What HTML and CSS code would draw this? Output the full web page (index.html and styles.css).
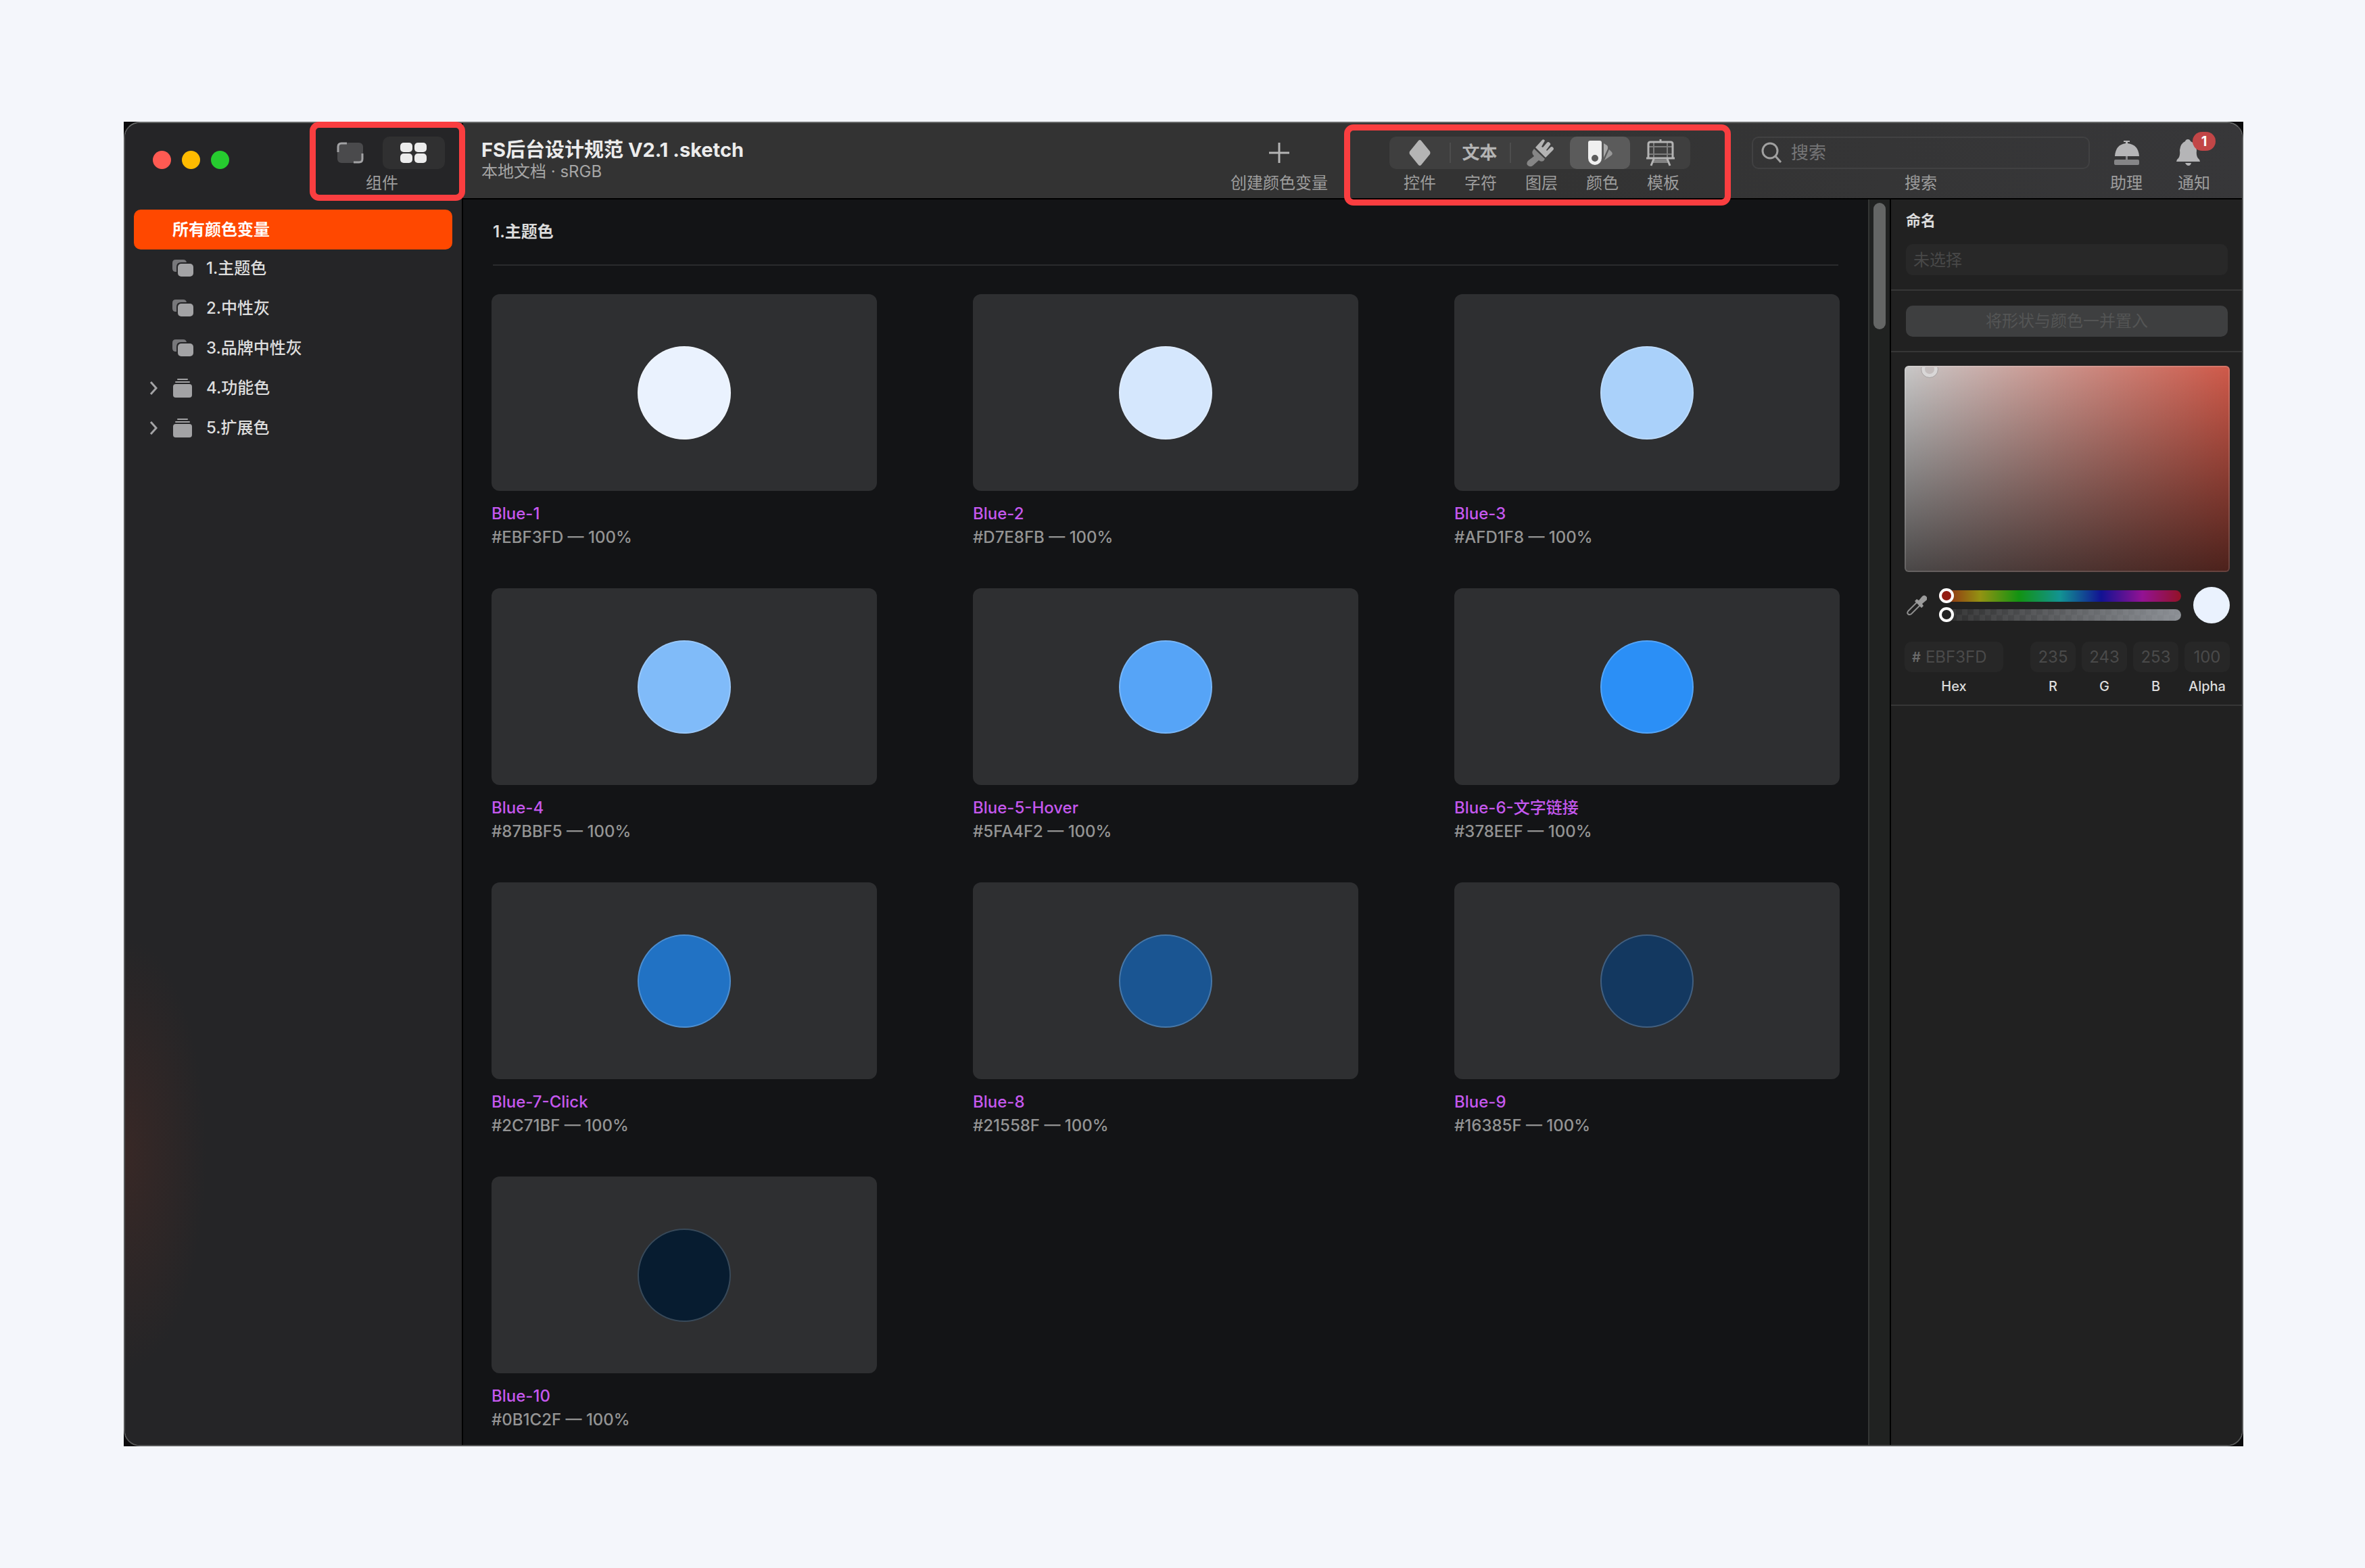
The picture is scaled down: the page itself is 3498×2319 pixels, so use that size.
FILE: index.html
```html
<!DOCTYPE html>
<html lang="zh-CN">
<head>
    <meta charset="UTF-8">
    <meta name="viewport" content="width=device-width, initial-scale=1.0">
    <title>FS后台设计规范 V2.1 .sketch</title>
    <link rel="stylesheet" href="styles.css">
</head>
<body>
    <div class="backdrop">
        <div class="window">
            <aside class="sidebar">
                <div class="sidebar-top">
                    <div class="lights">
                        <span class="light red"></span>
                        <span class="light yellow"></span>
                        <span class="light green"></span>
                    </div>
                    <div class="tool view-switch">
                        <div class="segments">
                            <button type="button" class="view-button" aria-label="画布">
                                <svg width="40" height="32" viewBox="0 0 40 32">
                                    <rect x="1" y="1" width="38" height="30" rx="6" fill="#4a4a4c"/>
                                    <path d="M2 15V7q0-5 5-5h8M38 17v8q0 5-5 5h-8" fill="none" stroke="#a2a2a4" stroke-width="3"/>
                                </svg>
                            </button>
                            <button type="button" class="view-button active" aria-label="组件">
                                <svg width="40" height="32" viewBox="0 0 40 32" fill="#ececec">
                                    <rect x="0" y="1" width="18" height="14" rx="5"/>
                                    <rect x="21" y="1" width="18" height="14" rx="5"/>
                                    <rect x="0" y="17" width="18" height="14" rx="5"/>
                                    <rect x="21" y="17" width="18" height="14" rx="5"/>
                                </svg>
                            </button>
                        </div>
                        <span class="tool-label">组件</span>
                        <span class="highlight"></span>
                    </div>
                </div>
                <nav>
                    <ul class="groups">
                        <li><a href="#" class="group active">所有颜色变量</a></li>
                        <li><a href="#" class="group">
                            <span class="chevron"></span>
                            <svg class="group-icon" width="32" height="28" viewBox="0 0 32 28">
                                <path d="M6 19H5q-5 0-5-5V6q0-5 5-5h11q4 0 5 4h-8q-7 0-7 7z" fill="#77777a"/>
                                <rect x="8" y="7" width="23" height="19" rx="5" fill="#a3a3a5"/>
                            </svg>
                            1.主题色</a></li>
                        <li><a href="#" class="group">
                            <span class="chevron"></span>
                            <svg class="group-icon" width="32" height="28" viewBox="0 0 32 28">
                                <path d="M6 19H5q-5 0-5-5V6q0-5 5-5h11q4 0 5 4h-8q-7 0-7 7z" fill="#77777a"/>
                                <rect x="8" y="7" width="23" height="19" rx="5" fill="#a3a3a5"/>
                            </svg>
                            2.中性灰</a></li>
                        <li><a href="#" class="group">
                            <span class="chevron"></span>
                            <svg class="group-icon" width="32" height="28" viewBox="0 0 32 28">
                                <path d="M6 19H5q-5 0-5-5V6q0-5 5-5h11q4 0 5 4h-8q-7 0-7 7z" fill="#77777a"/>
                                <rect x="8" y="7" width="23" height="19" rx="5" fill="#a3a3a5"/>
                            </svg>
                            3.品牌中性灰</a></li>
                        <li><a href="#" class="group">
                            <svg class="chevron" width="12" height="20" viewBox="0 0 12 20"><path d="M2 1l8 9-8 9" fill="none" stroke="#a3a3a5" stroke-width="3"/></svg>
                            <svg class="group-icon" width="32" height="28" viewBox="0 0 32 28" fill="#a3a3a5">
                                <rect x="7" y="0" width="16" height="2" rx="1"/>
                                <rect x="4" y="4" width="22" height="2" rx="1"/>
                                <rect x="1" y="8" width="28" height="20" rx="4"/>
                            </svg>
                            4.功能色</a></li>
                        <li><a href="#" class="group">
                            <svg class="chevron" width="12" height="20" viewBox="0 0 12 20"><path d="M2 1l8 9-8 9" fill="none" stroke="#a3a3a5" stroke-width="3"/></svg>
                            <svg class="group-icon" width="32" height="28" viewBox="0 0 32 28" fill="#a3a3a5">
                                <rect x="7" y="0" width="16" height="2" rx="1"/>
                                <rect x="4" y="4" width="22" height="2" rx="1"/>
                                <rect x="1" y="8" width="28" height="20" rx="4"/>
                            </svg>
                            5.扩展色</a></li>
                    </ul>
                </nav>
            </aside>

            <div class="workspace">
                <header class="toolbar">
                    <div class="document">
                        <h1>FS后台设计规范 V2.1 .sketch</h1>
                        <p>本地文档 · sRGB</p>
                    </div>

                    <button type="button" class="tool create">
                        <svg class="tool-icon" width="32" height="48" viewBox="0 0 32 48"><path d="M1 24h30M16 9v30" stroke="#b4b4b4" stroke-width="3"/></svg>
                        <span class="tool-label">创建颜色变量</span>
                    </button>

                    <div class="tool types">
                        <div class="segments type-bar">
                            <button type="button" class="type-button" aria-label="控件">
                                <svg width="34" height="40" viewBox="0 0 34 40"><path d="M15 2q2-2 4 0l13 16q1 2 0 4L19 38q-2 2-4 0L2 22q-1-2 0-4z" fill="#b4b4b4"/></svg>
                            </button>
                            <button type="button" class="type-button divided">文本</button>
                            <button type="button" class="type-button divided" aria-label="图层">
                                <svg width="40" height="42" viewBox="0 0 40 42">
                                    <path d="M13 13L23 2q2-2 4 1l-5 9 2 1 6-7q2-2 4 0t1 3l-6 8 1 1 5-5q2-2 4 0t0 4L28 28z" fill="#b4b4b4"/>
                                    <path d="M11 15l16 15-2 3q-4 2-7-1L9 40q-4 3-8-1-2-4 2-7l8-6q-4-4-2-8z" fill="#868686"/>
                                </svg>
                            </button>
                            <button type="button" class="type-button active" aria-label="颜色">
                                <svg width="36" height="36" viewBox="0 0 36 36">
                                    <path fill-rule="evenodd" d="M3 0h14q3 0 3 3v23a10 10 0 0 1-20 0V3q0-3 3-3zM10 21a5 5 0 1 0 0 10 5 5 0 0 0 0-10z" fill="#efefef"/>
                                    <path d="M23 4l5 3q2 2 1 5l-6 13z" fill="#a9a9a9"/>
                                    <path d="M31 13l4 4q2 3-1 5l-10 7z" fill="#999"/>
                                </svg>
                            </button>
                            <button type="button" class="type-button" aria-label="模板">
                                <svg width="42" height="40" viewBox="0 0 42 40" fill="none">
                                    <path d="M10 30h22v5H9z" fill="#828282"/>
                                    <path d="M11 5v22M31 5v22M4 11h34M4 22h34" stroke="#7d7d7d" stroke-width="2"/>
                                    <path d="M3 27V7q0-3 3-3h30q3 0 3 3v20M0 28h42M21 0v4M11 29L7 39M31 29l4 10" stroke="#b4b4b4" stroke-width="3"/>
                                </svg>
                            </button>
                        </div>
                        <div class="type-labels">
                            <span class="tool-label">控件</span>
                            <span class="tool-label">字符</span>
                            <span class="tool-label">图层</span>
                            <span class="tool-label">颜色</span>
                            <span class="tool-label">模板</span>
                        </div>
                        <span class="highlight"></span>
                    </div>

                    <div class="tool search">
                        <div class="search-box">
                            <svg width="30" height="32" viewBox="0 0 30 32" fill="none" stroke="#a0a0a0" stroke-width="3"><circle cx="13" cy="13" r="11"/><path d="M21 21l8 9"/></svg>
                            <input type="search" id="search" placeholder="搜索">
                        </div>
                        <label class="tool-label" for="search">搜索</label>
                    </div>

                    <button type="button" class="tool assistant">
                        <svg class="tool-icon" width="40" height="48" viewBox="0 0 40 48">
                            <path d="M16 6h9v2h-3v2q16 2 17 19H3Q4 12 19 10V8h-3z" fill="#b5b5b7"/>
                            <path d="M19 29h3v5h15q2 0 2 2v4q0 2-2 2H4q-2 0-2-2v-4q0-2 2-2h15z" fill="#858587"/>
                        </svg>
                        <span class="tool-label">助理</span>
                    </button>
                    <button type="button" class="tool notice">
                        <svg class="tool-icon" width="52" height="48" viewBox="0 0 52 48" fill="#b5b5b7">
                            <path d="M17 4q3 0 4 3 8 3 9 13-1 8 2 12 3 2 3 5H0q0-3 3-5 3-4 2-12 1-10 8-13 1-3 4-3zM13 39h9q-1 4-4 4t-5-4z"/>
                        </svg>
                        <span class="tool-label">通知</span>
                        <span class="badge">1</span>
                    </button>
                </header>

                <div class="panes">
                    <main class="library">
                        <h2>1.主题色</h2>
                        <div class="swatches">
                            <figure class="swatch">
                                <div class="card"><span class="dot blue-1"></span></div>
                                <figcaption><strong>Blue-1</strong><span>#EBF3FD — 100%</span></figcaption>
                            </figure>
                            <figure class="swatch">
                                <div class="card"><span class="dot blue-2"></span></div>
                                <figcaption><strong>Blue-2</strong><span>#D7E8FB — 100%</span></figcaption>
                            </figure>
                            <figure class="swatch">
                                <div class="card"><span class="dot blue-3"></span></div>
                                <figcaption><strong>Blue-3</strong><span>#AFD1F8 — 100%</span></figcaption>
                            </figure>
                            <figure class="swatch">
                                <div class="card"><span class="dot blue-4"></span></div>
                                <figcaption><strong>Blue-4</strong><span>#87BBF5 — 100%</span></figcaption>
                            </figure>
                            <figure class="swatch">
                                <div class="card"><span class="dot blue-5"></span></div>
                                <figcaption><strong>Blue-5-Hover</strong><span>#5FA4F2 — 100%</span></figcaption>
                            </figure>
                            <figure class="swatch">
                                <div class="card"><span class="dot blue-6"></span></div>
                                <figcaption><strong>Blue-6-文字链接</strong><span>#378EEF — 100%</span></figcaption>
                            </figure>
                            <figure class="swatch">
                                <div class="card"><span class="dot blue-7"></span></div>
                                <figcaption><strong>Blue-7-Click</strong><span>#2C71BF — 100%</span></figcaption>
                            </figure>
                            <figure class="swatch">
                                <div class="card"><span class="dot blue-8"></span></div>
                                <figcaption><strong>Blue-8</strong><span>#21558F — 100%</span></figcaption>
                            </figure>
                            <figure class="swatch">
                                <div class="card"><span class="dot blue-9"></span></div>
                                <figcaption><strong>Blue-9</strong><span>#16385F — 100%</span></figcaption>
                            </figure>
                            <figure class="swatch">
                                <div class="card"><span class="dot blue-10"></span></div>
                                <figcaption><strong>Blue-10</strong><span>#0B1C2F — 100%</span></figcaption>
                            </figure>
                        </div>
                    </main>

                    <div class="scroller"><div class="scroller-thumb"></div></div>

                    <aside class="inspector">
                        <section class="name-section">
                            <label for="name">命名</label>
                            <input type="text" id="name" placeholder="未选择" disabled>
                        </section>
                        <section class="insert-section">
                            <button type="button" disabled>将形状与颜色一并置入</button>
                        </section>
                        <section class="color-section">
                            <div class="picker"><span class="picker-handle"></span></div>
                            <div class="color-row">
                                <button type="button" class="eyedropper" aria-label="取色器">
                                    <svg width="30" height="30" viewBox="0 0 30 30">
                                        <path d="M16 10L3 23q-3 3-1 5t5 0l13-13" fill="none" stroke="#8e8e8e" stroke-width="2"/>
                                        <path d="M12 9l3-3 3 2 5-6q3-3 6 0t0 6l-6 5 2 3-3 3z" fill="#9b9b9b"/>
                                    </svg>
                                </button>
                                <div class="sliders">
                                    <input type="range" class="hue" min="0" max="360" value="0" aria-label="色相">
                                    <input type="range" class="alpha" min="0" max="100" value="0" aria-label="不透明度">
                                </div>
                                <span class="current"></span>
                            </div>
                            <div class="values">
                                <div class="field hex">
                                    <div class="hex-box"><span>#</span><input type="text" id="hex" value="EBF3FD" disabled></div>
                                    <label for="hex">Hex</label>
                                </div>
                                <div class="field">
                                    <input type="text" id="r" value="235" disabled>
                                    <label for="r">R</label>
                                </div>
                                <div class="field">
                                    <input type="text" id="g" value="243" disabled>
                                    <label for="g">G</label>
                                </div>
                                <div class="field">
                                    <input type="text" id="b" value="253" disabled>
                                    <label for="b">B</label>
                                </div>
                                <div class="field">
                                    <input type="text" id="a" value="100" disabled>
                                    <label for="a">Alpha</label>
                                </div>
                            </div>
                        </section>
                    </aside>
                </div>
            </div>
        </div>
    </div>
</body>
</html>
```
FILE: styles.css
```css
* {
    box-sizing: border-box;
}
body {
    margin: 0;
    padding: 180px 180px 180px 183px;
    background: #f4f6fb;
    color: #dcdcdc;
    font-family: Inter, "Noto Sans CJK SC", sans-serif;
    font-size: 24px;
    line-height: 30px;
}
button, input {
    font: inherit;
    color: inherit;
    border: none;
    padding: 0;
    background: none;
}
h1, h2, p, ul, figure {
    margin: 0;
    padding: 0;
}
.backdrop {
    background: #0b0b0c;
}
.window {
    display: flex;
    min-height: calc(100vh - 360px);
    border: 2px solid #565757;
    border-top-color: #666867;
    border-radius: 24px;
}

/* sidebar */
.sidebar {
    position: relative;
    z-index: 1;
    flex: none;
    width: 500px;
    border-right: 2px solid #000;
    border-radius: 22px 0 0 22px;
    background: radial-gradient(120px 320px at 0 78%, #382826, rgba(37, 37, 37, 0)), #252527;
}
.sidebar-top {
    display: flex;
    justify-content: space-between;
    height: 128px;
    padding: 20px 25px 0 41px;
}
.lights {
    display: flex;
    gap: 16px;
    padding-top: 21px;
}
.light {
    width: 27px;
    height: 27px;
    border-radius: 50%;
}
.red {
    background: #ff5a52;
}
.yellow {
    background: #ffbb00;
}
.green {
    background: #26cb2f;
}
.segments {
    display: flex;
    height: 48px;
}
.view-switch .segments {
    gap: 2px;
}
.view-button {
    display: flex;
    align-items: center;
    justify-content: center;
    width: 92px;
    border-radius: 10px;
}
.view-button.active {
    background: #303031;
}
.groups {
    list-style: none;
    padding: 0 14px 0 13px;
}
.group {
    display: flex;
    align-items: center;
    height: 59px;
    padding: 0 23px 4px;
    border-radius: 10px;
    color: #dedede;
    font-weight: 500;
    text-decoration: none;
}
.group.active {
    padding: 0 57px;
    background: #ff4800;
    color: #fff;
    font-weight: 700;
}
.chevron {
    width: 12px;
    margin-right: 22px;
}
.group-icon {
    margin-right: 18px;
}

/* toolbar */
.workspace {
    display: flex;
    flex: 1;
    flex-direction: column;
    min-width: 0;
}
.toolbar {
    display: flex;
    align-items: flex-start;
    height: 113px;
    padding: 20px 47px 0 27px;
    border-bottom: 2px solid #000;
    border-radius: 0 22px 0 0;
    background: linear-gradient(to right, #333, #333 60%, #373739);
}
.document {
    flex: 1;
    padding-top: 2px;
}
.document h1 {
    color: #ececec;
    font-size: 29px;
    font-weight: 700;
    line-height: 36px;
}
.document p {
    color: #a6a6a6;
    line-height: 28px;
}
.tool {
    position: relative;
    display: flex;
    flex-direction: column;
    align-items: center;
    flex: none;
}
.tool-label {
    margin-top: 6px;
    color: #9d9d9d;
    line-height: 30px;
    white-space: nowrap;
}
.types {
    width: 450px;
    margin: 0 86px 0 91px;
    align-items: flex-start;
}
.type-bar {
    border-radius: 10px;
    background: #3f3f3f;
}
.type-button {
    display: flex;
    align-items: center;
    justify-content: center;
    width: 89px;
    border-radius: 10px;
    color: #b4b4b4;
    font-size: 26px;
    font-weight: 700;
}
.type-button.active {
    background: #5b5b5b;
}
.type-button.divided {
    border-radius: 0;
    background: linear-gradient(#4d4d4d, #4d4d4d) left center / 2px 30px no-repeat;
}
.type-labels {
    display: grid;
    grid-template-columns: repeat(5, 1fr);
    width: 100%;
    text-align: center;
}
.highlight {
    position: absolute;
    border: 9px solid #fa3e40;
    border-radius: 14px;
    pointer-events: none;
}
.view-switch .highlight {
    top: -22px;
    left: -14px;
    right: -30px;
    height: 117px;
}
.types .highlight {
    top: -18px;
    left: -67px;
    right: -55px;
    height: 120px;
}
.search {
    width: 500px;
}
.search-box {
    display: flex;
    align-items: center;
    gap: 14px;
    width: 100%;
    height: 48px;
    padding: 0 12px;
    border: 2px solid #414142;
    border-radius: 10px;
}
.search-box input {
    flex: 1;
    outline: none;
    font-size: 26px;
}
.search-box input::placeholder {
    color: #757577;
}
.assistant {
    width: 48px;
    margin-left: 30px;
}
.notice {
    width: 48px;
    margin-left: 52px;
}
.badge {
    position: absolute;
    top: -7px;
    left: 22px;
    width: 34px;
    height: 28px;
    border-radius: 14px;
    background: #c24647;
    color: #fff;
    font-size: 20px;
    font-weight: 700;
    line-height: 28px;
    text-align: center;
}

/* library */
.panes {
    display: flex;
    flex: 1;
}
.library {
    flex: 1;
    padding: 0 42px 20px;
    background: #131416;
}
.library h2 {
    height: 98px;
    margin: 0 2px 42px;
    border-bottom: 2px solid #2a2b2d;
    font-size: 24px;
    font-weight: 600;
    line-height: 96px;
}
.swatches {
    display: grid;
    grid-template-columns: repeat(3, 1fr);
    gap: 58px 142px;
}
.card {
    display: flex;
    align-items: center;
    justify-content: center;
    height: 291px;
    border-radius: 12px;
    background: #2e2f31;
}
.dot {
    width: 138px;
    height: 138px;
    border: 2px solid rgba(255, 255, 255, 0.2);
    border-radius: 50%;
}
.blue-1 { background-color: #eaf2fe; }
.blue-2 { background-color: #d5e7fd; }
.blue-3 { background-color: #aad1fa; }
.blue-4 { background-color: #80bbf9; }
.blue-5 { background-color: #56a4f7; }
.blue-6 { background-color: #2b8ff6; }
.blue-7 { background-color: #2172c4; }
.blue-8 { background-color: #1a5592; }
.blue-9 { background-color: #133860; }
.blue-10 { background-color: #071c30; }
.swatch figcaption {
    display: flex;
    flex-direction: column;
    margin-top: 16px;
    color: #949494;
    font-weight: 500;
    line-height: 35px;
}
.swatch strong {
    color: #c558ee;
    font-weight: 500;
}
.scroller {
    width: 32px;
    padding: 5px 6px;
    border-left: 2px solid #343635;
    background: #202221;
}
.scroller-thumb {
    width: 18px;
    height: 187px;
    border-radius: 9px;
    background: #646665;
}

/* inspector */
.inspector {
    width: 521px;
    border-left: 2px solid #000;
    border-radius: 0 0 22px 0;
    background: #212121;
}
.inspector section {
    border-bottom: 2px solid #363636;
}
.name-section {
    display: flex;
    flex-direction: column;
    gap: 20px;
    padding: 16px 21px 21px 22px;
}
.name-section label {
    font-size: 22px;
    font-weight: 700;
}
.name-section input {
    height: 46px;
    padding: 0 11px;
    border-radius: 10px;
    background: #282828;
}
.name-section input::placeholder {
    color: #484848;
}
.insert-section {
    padding: 22px 21px 21px 22px;
}
.insert-section button {
    display: block;
    width: 100%;
    height: 46px;
    border-radius: 10px;
    background: #3e3f40;
    color: #545555;
}
.color-section {
    padding: 20px 18px 15px 20px;
}
.picker {
    position: relative;
    height: 305px;
    overflow: hidden;
    border: 2px solid rgba(255, 255, 255, 0.15);
    border-radius: 6px;
    background: linear-gradient(to bottom, transparent, rgba(8, 4, 4, 0.66)), linear-gradient(to right, #c8c8c8, #cf5949);
    background-origin: border-box;
}
.picker-handle {
    position: absolute;
    top: -9px;
    left: 23px;
    width: 24px;
    height: 24px;
    border: 5px solid #d9d7d7;
    border-radius: 50%;
    outline: 1px solid #a9a5a5;
    background: #c5bebe;
}
.color-row {
    display: flex;
    align-items: center;
    gap: 18px;
    margin-top: 22px;
    padding-left: 3px;
}
.eyedropper {
    width: 30px;
    height: 30px;
}
.sliders {
    display: flex;
    flex: 1;
    flex-direction: column;
    gap: 6px;
}
.sliders input {
    appearance: none;
    width: 100%;
    height: 22px;
    margin: 0;
}
.sliders input::-webkit-slider-runnable-track {
    height: 17px;
    border-radius: 9px;
}
.hue::-webkit-slider-runnable-track {
    background: linear-gradient(to right, #931b12, #939312 17%, #129312 33%, #129393 50%, #121293 67%, #931293 84%, #931226);
}
.alpha::-webkit-slider-runnable-track {
    background: linear-gradient(to right, rgba(34, 34, 34, 0.7), rgba(148, 152, 158, 0.9)), repeating-conic-gradient(#3c3c3c 0 25%, #5e5e5e 0 50%) 0 0 / 17px 17px;
}
.sliders input::-webkit-slider-thumb {
    appearance: none;
    width: 22px;
    height: 22px;
    margin-top: -3px;
    border: 4px solid #fff;
    border-radius: 50%;
    background: #222;
}
.sliders .hue::-webkit-slider-thumb {
    background: #931b12;
}
.current {
    width: 54px;
    height: 54px;
    border-radius: 50%;
    background: #eaf2fe;
}
.values {
    display: flex;
    gap: 9px;
    margin-top: 27px;
}
.field {
    display: flex;
    flex-direction: column;
    width: 67px;
}
.field.hex {
    width: 146px;
    margin-right: auto;
}
.field input {
    width: 100%;
    height: 45px;
    border-radius: 10px;
    background: #272727;
    color: #4a4a4a;
    text-align: center;
}
.field label {
    margin-top: 9px;
    font-size: 20px;
    font-weight: 500;
    line-height: 24px;
    text-align: center;
}
.hex-box {
    display: flex;
    align-items: center;
    gap: 7px;
    height: 45px;
    padding-left: 11px;
    border-radius: 10px;
    background: #272727;
}
.hex-box span {
    color: #6a6a6a;
    font-size: 20px;
    font-weight: 600;
}
.hex-box input {
    background: none;
    text-align: left;
}
```
